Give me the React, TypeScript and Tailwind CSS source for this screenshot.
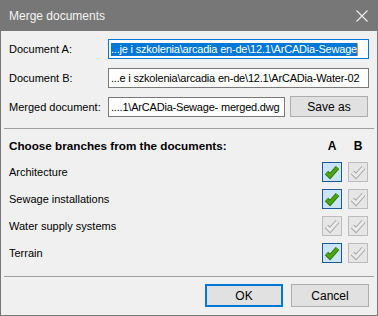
function Check({ on }: { on: boolean }) {
  return (
    <div
      className={
        on
          ? "w-[20px] h-[20px] border border-[#1b5a9a] bg-[#cce4f7]"
          : "w-[20px] h-[20px] border border-[#bcbcbc] bg-[#e6e6e6]"
      }
    >
      <svg width="18" height="18" viewBox="0 0 18 18">
        <polyline
          points="3.5,9.5 7,13 14.5,4.5"
          fill="none"
          stroke={on ? "#2b7a0b" : "#a6a6a6"}
          strokeWidth="4.8"
          strokeLinejoin="miter"
        />
        <polyline
          points="3.5,9.5 7,13 14.5,4.5"
          fill="none"
          stroke={on ? "#4fa516" : "#ececec"}
          strokeWidth="2.8"
          strokeLinejoin="miter"
        />
      </svg>
    </div>
  );
}

const branches = [
  { name: "Architecture", a: true },
  { name: "Sewage installations", a: true },
  { name: "Water supply systems", a: false },
  { name: "Terrain", a: true },
];

export default function App() {
  return (
    <div className="w-[378px] h-[316px] flex flex-col bg-[#f0f0f0] border-x border-b border-[#777777] font-['Liberation_Sans',Arial,sans-serif] text-[11px] text-black">
      {/* Title bar */}
      <div className="h-[31px] shrink-0 bg-[#777777] flex items-center justify-between pl-[8px] pr-[9px]">
        <span className="text-[12px] text-[#f4f4f4]">Merge documents</span>
        <svg width="12" height="12" viewBox="0 0 12 12">
          <path d="M0.5 0.5 L11.5 11.5 M11.5 0.5 L0.5 11.5" stroke="#f0f0f0" strokeWidth="1.1" />
        </svg>
      </div>

      <div className="flex flex-col px-[8px] pt-[8px]">
        {/* File fields */}
        <div className="flex flex-col gap-[9px]">
          <div className="flex items-center h-[20px]">
            <span className="w-[99px] shrink-0">Document A:</span>
            <div className="flex-1 h-[20px] border border-[#0078d7] bg-white flex items-center pl-[2px] overflow-hidden whitespace-nowrap tracking-[-0.2px]">
              <span className="bg-[#0078d7] text-white leading-[13px]">
                ...je i szkolenia\arcadia en-de\12.1\ArCADia-Sewage
              </span>
              <span className="w-[1px] h-[13px] bg-[#ff8a24]" />
            </div>
          </div>
          <div className="flex items-center h-[20px]">
            <span className="w-[99px] shrink-0">Document B:</span>
            <div className="flex-1 h-[20px] border border-[#7a7a7a] bg-white flex items-center pl-[2px] overflow-hidden whitespace-nowrap tracking-[-0.2px]">
              ...e i szkolenia\arcadia en-de\12.1\ArCADia-Water-02
            </div>
          </div>
          <div className="flex items-end h-[20px]">
            <span className="w-[99px] shrink-0 self-center">Merged document:</span>
            <div className="w-[177px] h-[20px] border border-[#7a7a7a] bg-white flex items-center pl-[2px] overflow-hidden whitespace-nowrap tracking-[-0.2px]">
              ....1\ArCADia-Sewage- merged.dwg
            </div>
            <button className="ml-[5px] w-[78px] h-[21px] border border-[#adadad] bg-[#e1e1e1] text-[12px]">
              Save as
            </button>
          </div>
        </div>

        <div className="mx-[-5px] mt-[11px] h-[1px] bg-[#a0a0a0]" />

        {/* Branches */}
        <div className="mt-[7px] flex items-center h-[20px] pr-[1px]">
          <span className="flex-1 font-bold text-[11.7px]">Choose branches from the documents:</span>
          <div className="flex gap-[6px] font-bold text-[12px]">
            <span className="w-[20px] text-center">A</span>
            <span className="w-[20px] text-center">B</span>
          </div>
        </div>
        <div className="mt-[6px] flex flex-col gap-[7px] pr-[1px]">
          {branches.map((b) => (
            <div key={b.name} className="flex items-center h-[20px]">
              <span className="flex-1">{b.name}</span>
              <div className="flex gap-[6px]">
                <Check on={b.a} />
                <Check on={false} />
              </div>
            </div>
          ))}
        </div>

        <div className="mx-[-5px] mt-[13px] h-[1px] bg-[#a0a0a0]" />

        {/* Buttons */}
        <div className="mt-[7px] flex justify-end gap-[8px]">
          <button className="w-[78px] h-[23px] border-2 border-[#0078d7] bg-[#e1e1e1] text-[12px]">
            OK
          </button>
          <button className="w-[78px] h-[23px] border border-[#adadad] bg-[#e1e1e1] text-[12px]">
            Cancel
          </button>
        </div>
      </div>
    </div>
  );
}
